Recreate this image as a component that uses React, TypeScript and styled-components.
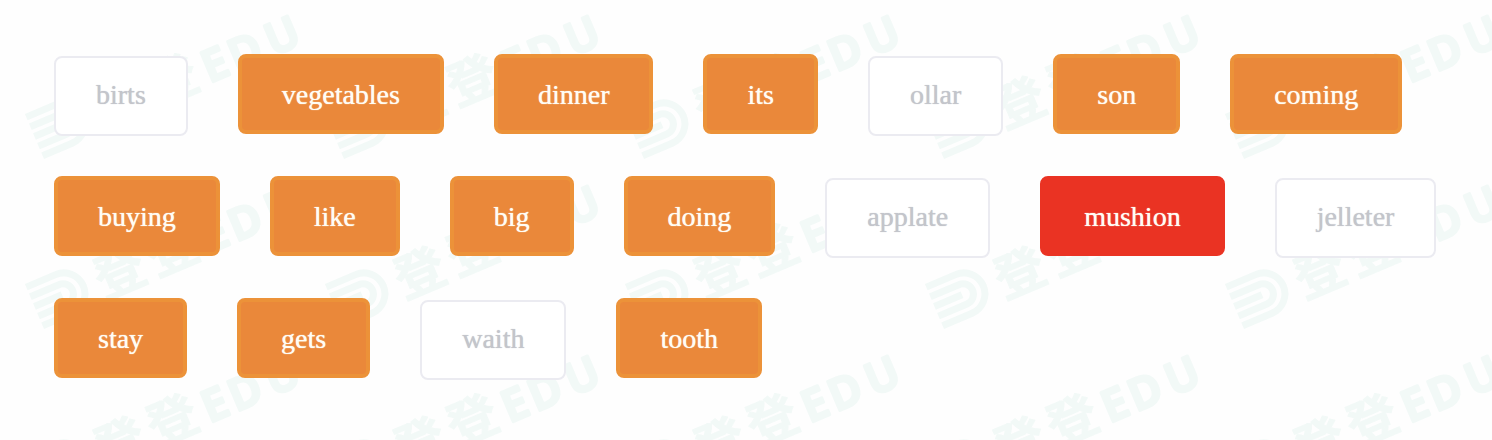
import React from "react";
import styled, { createGlobalStyle } from "styled-components";

const GlobalStyle = createGlobalStyle`
  body {
    margin: 0;
    background: #fefefe;
  }
`;

type Status = "idle" | "selected" | "wrong";

const palette = {
  idle: { fill: "#ffffff", border: "2px solid #ebebf1", text: "#c3c5cb", bottom: 22 },
  selected: { fill: "#ea883a", border: "4px solid #ec9239", text: "#fffdf5", bottom: 18 },
  wrong: { fill: "#ea3323", border: "4px solid #ea3323", text: "#fffdf5", bottom: 18 },
};

const Page = styled.main`
  position: relative;
  min-height: 100vh;
  box-sizing: border-box;
  padding: 54px;
  overflow: hidden;
`;

const Watermark = styled.svg`
  position: absolute;
  inset: 0;
  width: 100%;
  height: 100%;
  pointer-events: none;
`;

const WordBank = styled.div`
  position: relative;
  display: flex;
  flex-wrap: wrap;
  align-items: baseline;
  gap: 40px 50px;
`;

const WordButton = styled.button<{ $status: Status }>`
  padding: 20px 40px ${(p) => palette[p.$status].bottom}px;
  border: ${(p) => palette[p.$status].border};
  border-radius: 8px;
  background: ${(p) => palette[p.$status].fill};
  color: ${(p) => palette[p.$status].text};
  font: 28px/34px "Liberation Serif", "Times New Roman", serif;
  text-shadow: 0 0 1px currentColor;
  cursor: pointer;
`;

const words: { text: string; status: Status }[] = [
  { text: "birts", status: "idle" },
  { text: "vegetables", status: "selected" },
  { text: "dinner", status: "selected" },
  { text: "its", status: "selected" },
  { text: "ollar", status: "idle" },
  { text: "son", status: "selected" },
  { text: "coming", status: "selected" },
  { text: "buying", status: "selected" },
  { text: "like", status: "selected" },
  { text: "big", status: "selected" },
  { text: "doing", status: "selected" },
  { text: "applate", status: "idle" },
  { text: "mushion", status: "wrong" },
  { text: "jelleter", status: "idle" },
  { text: "stay", status: "selected" },
  { text: "gets", status: "selected" },
  { text: "waith", status: "idle" },
  { text: "tooth", status: "selected" },
];

function BrandWatermark() {
  return (
    <Watermark aria-hidden="true">
      <defs>
        <pattern id="brand" width="300" height="170" patternUnits="userSpaceOnUse">
          <g transform="translate(44 159) rotate(-23)" fill="#f2f9f7" stroke="#f2f9f7">
            <g fill="none" strokeWidth="7">
              <path d="M0 -45.500H32A21 21 0 0 1 32 -3.500H0" />
              <path d="M0 -35H31A10.500 10.500 0 0 1 31 -14H0" />
              <path d="M0 -24.500H30" />
            </g>
            <g strokeWidth="1" strokeLinejoin="round" fontFamily='"Noto Sans CJK SC", sans-serif' fontWeight="700" fontSize="50">
              <text x="67" y="-4">登</text>
              <text x="124" y="-4">登</text>
            </g>
            <g strokeWidth="3" strokeLinejoin="round" fontFamily='"Noto Sans", sans-serif' fontWeight="600" fontSize="44">
              <text x="182" y="-5">E</text>
              <text x="211" y="-5">D</text>
              <text x="251" y="-5">U</text>
            </g>
          </g>
        </pattern>
      </defs>
      <rect width="100%" height="100%" fill="url(#brand)" />
    </Watermark>
  );
}

export default function App() {
  return (
    <>
      <GlobalStyle />
      <Page>
        <BrandWatermark />
        <WordBank>
          {words.map((word) => (
            <WordButton key={word.text} type="button" $status={word.status}>
              {word.text}
            </WordButton>
          ))}
        </WordBank>
      </Page>
    </>
  );
}
